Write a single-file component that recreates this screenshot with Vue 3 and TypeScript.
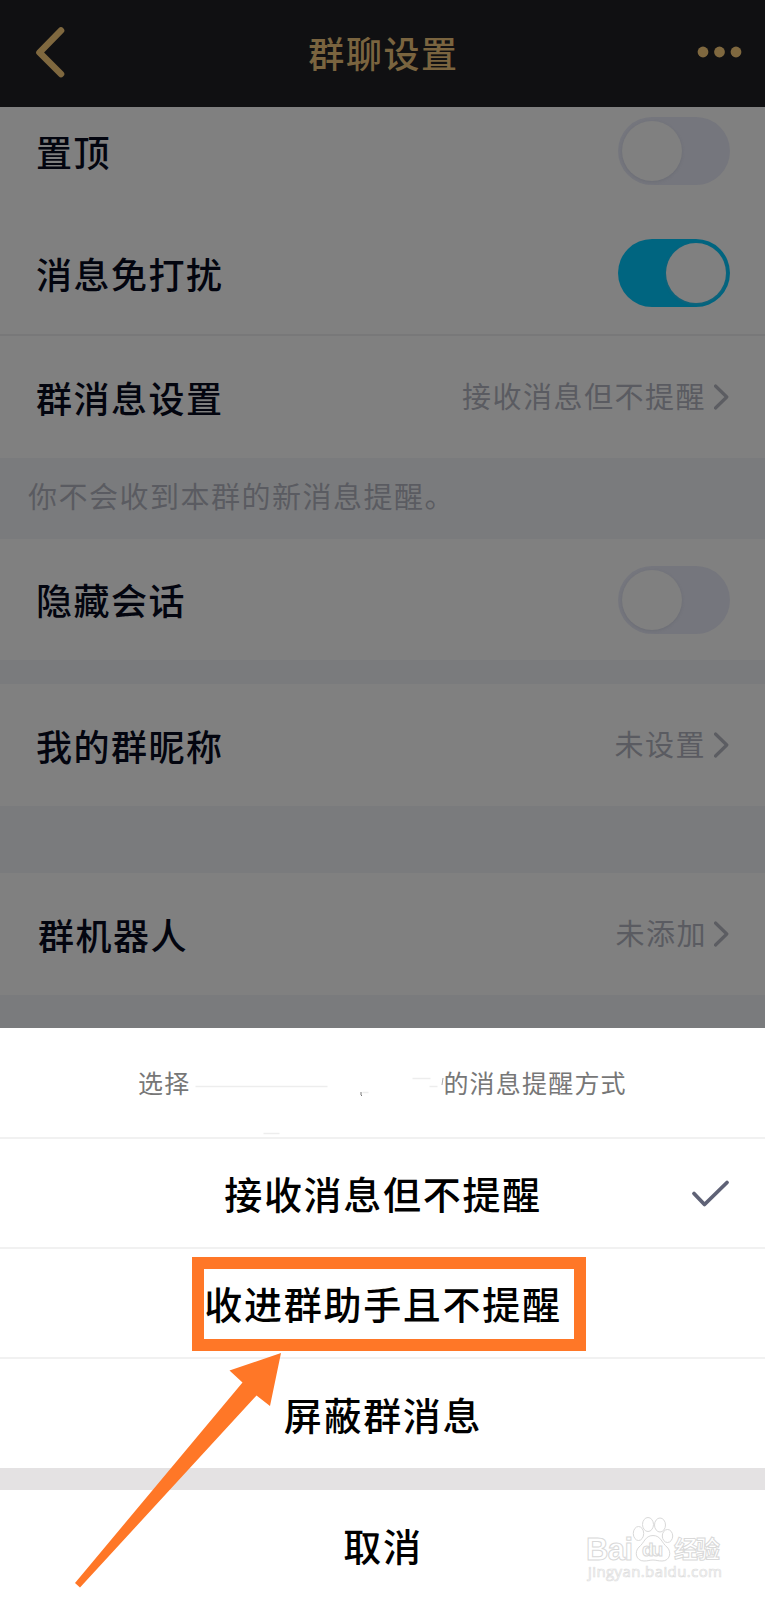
<script setup lang="ts">
interface Row {
  label: string
  kind: 'switch' | 'link'
  on?: boolean
  value?: string
  cls?: string
}

const groups: { rows: Row[]; note?: string; gap: string }[] = [
  {
    rows: [
      { label: '置顶', kind: 'switch', on: false, cls: 'first' },
      { label: '消息免打扰', kind: 'switch', on: true },
      { label: '群消息设置', kind: 'link', value: '接收消息但不提醒', cls: 'ruled' },
    ],
    note: '你不会收到本群的新消息提醒。',
    gap: 'gap-note',
  },
  { rows: [{ label: '隐藏会话', kind: 'switch', on: false, cls: 'short' }], gap: 'gap-small' },
  { rows: [{ label: '我的群昵称', kind: 'link', value: '未设置' }], gap: 'gap-large' },
  { rows: [{ label: '群机器人', kind: 'link', value: '未添加', cls: 'robot' }], gap: 'gap-end' },
]

const options = [
  { text: '接收消息但不提醒', checked: true },
  { text: '收进群助手且不提醒', marked: true },
  { text: '屏蔽群消息' },
]
</script>

<template>
  <div class="screen">
    <header class="bar">
      <svg class="back" width="34" height="56" viewBox="0 0 34 56">
        <path d="M27 6.500 5.500 28.500 27 50" />
      </svg>
      <h1>群聊设置</h1>
      <svg class="more" width="46" height="14" viewBox="0 0 46 14">
        <circle cx="6" cy="7" r="5.4" /><circle cx="22.500" cy="7" r="5.4" /><circle cx="39" cy="7" r="5.4" />
      </svg>
    </header>

    <main class="settings">
      <section v-for="(group, i) in groups" :key="i">
        <div v-for="row in group.rows" :key="row.label" class="row" :class="row.cls">
          <span class="label">{{ row.label }}</span>
          <span v-if="row.kind === 'switch'" class="switch" :class="{ on: row.on }"><i></i></span>
          <span v-else class="link">
            <span class="value">{{ row.value }}</span>
            <svg width="16" height="28" viewBox="0 0 16 28"><path d="M1.500 3 12.800 14 1.500 25" /></svg>
          </span>
        </div>
        <div class="gap" :class="group.gap">{{ group.note }}</div>
      </section>
    </main>

    <section class="sheet">
      <div class="sheet-title">
        <span>选择</span>
        <svg class="name" width="250" height="80" viewBox="0 0 250 80">
          <path class="faint" d="M4 33.500h132M221 25.500h18M238 33.500h8M72 80.500h16" />
          <path class="speck" d="M169.500 39v3l1 1" />
          <path class="faint" d="M171 39.500h6" />
          <path class="tick" d="M251.500 25l-1 7" />
        </svg>
        <span>的消息提醒方式</span>
      </div>
      <div v-for="option in options" :key="option.text" class="option">
        <span>{{ option.text }}</span>
        <svg v-if="option.checked" class="check" width="40" height="30" viewBox="0 0 40 30">
          <path d="M4 14.500 14.500 25.500 37 3.500" />
        </svg>
        <div v-if="option.marked" class="frame"></div>
      </div>
      <div class="split"></div>
      <div class="cancel">取消</div>
    </section>

    <svg class="arrow" width="215" height="240" viewBox="70 1350 215 240">
      <path d="M281 1353 229.500 1370.500 242.500 1382.500 75 1583 80 1587.500 256.500 1395.500 270 1406Z" />
    </svg>

    <svg class="watermark" width="145" height="75" viewBox="580 1512 145 75">
      <g class="brand">
        <text x="586" y="1560" font-size="31" textLength="47">Bai</text>
        <path d="M653 1535.500c-8 0-9 8-14 11.500-5 5-3 14 5 14 4 0 6-1 9-1s5 1 9 1c8 0 10-9 5-14-5-3.500-6-11.500-14-11.500z" />
        <ellipse cx="638.500" cy="1533.500" rx="5.200" ry="7" />
        <ellipse cx="648" cy="1524.500" rx="5.500" ry="7" />
        <ellipse cx="660" cy="1525" rx="5.500" ry="7" />
        <ellipse cx="667.500" cy="1536" rx="5.200" ry="6.500" />
        <text x="642" y="1556" font-size="19" textLength="21">du</text>
        <text class="cn" x="674" y="1558" font-size="24" textLength="46">经验</text>
      </g>
      <text class="url" x="588" y="1577" font-size="15" textLength="134">jingyan.baidu.com</text>
    </svg>
  </div>
</template>

<style>
body {
  background: #fff;
}
</style>

<style scoped>
.screen {
  position: relative;
  display: flex;
  flex-direction: column;
  width: 765px;
  height: 1600px;
  overflow: hidden;
  background: #fff;
  font-family: "Noto Sans CJK SC", sans-serif;
}
.bar {
  display: flex;
  align-items: center;
  justify-content: space-between;
  flex: none;
  box-sizing: border-box;
  height: 107px;
  padding: 0 22px 4px 34px;
  background: #101012;
}
.bar h1 {
  margin: 0 0 0 2px;
  color: #7a643f;
  font-size: 36px;
  line-height: 54px;
  font-weight: 500;
  letter-spacing: 1.6px;
}
.back path {
  fill: none;
  stroke: #7f683f;
  stroke-width: 6.6;
  stroke-linecap: round;
  stroke-linejoin: round;
}
.more {
  fill: #7f683f;
}
.settings {
  flex: none;
  height: 921px;
  overflow: hidden;
  background: #808080;
}
.row {
  display: flex;
  align-items: center;
  justify-content: space-between;
  box-sizing: border-box;
  height: 122px;
  padding: 0 35px 0 36px;
}
.row.first {
  margin-top: -17px;
}
.row.ruled {
  height: 124px;
  border-top: 2px solid #787879;
}
.row.short {
  height: 121px;
}
.row.robot .label {
  margin-left: 2px;
}
.row.robot .link {
  gap: 7px;
}
.label {
  margin-bottom: 1px;
  color: #03050f;
  font-size: 36px;
  line-height: 54px;
  font-weight: 500;
  letter-spacing: 1.500px;
}
.switch {
  display: flex;
  box-sizing: border-box;
  width: 112px;
  height: 68px;
  padding: 4px;
  border-radius: 34px;
  background: #75767d;
}
.switch i {
  width: 60px;
  height: 60px;
  border-radius: 50%;
  background: #808080;
  box-shadow: 0 1px 3px #5b5c6655;
}
.switch.on {
  justify-content: flex-end;
  background: #006580;
}
.link {
  display: flex;
  align-items: center;
  gap: 8px;
}
.value {
  margin-bottom: 4px;
  color: #5a5b61;
  font-size: 29px;
  line-height: 42px;
  letter-spacing: 1.500px;
}
.link svg path {
  fill: none;
  stroke: #5c5d62;
  stroke-width: 3.2;
  stroke-linecap: round;
  stroke-linejoin: round;
}
.gap {
  box-sizing: border-box;
  background: #7a7b7d;
}
.gap-note {
  height: 81px;
  padding: 16px 0 0 28px;
  color: #5a5b61;
  font-size: 29px;
  line-height: 42px;
  letter-spacing: 1.500px;
}
.gap-small {
  height: 24px;
}
.gap-large {
  height: 67px;
}
.gap-end {
  height: 40px;
}
.sheet {
  flex: 1;
  background: #fff;
}
.sheet-title {
  display: flex;
  align-items: center;
  box-sizing: border-box;
  height: 109px;
  padding: 0 0 1px 138px;
  color: #777;
  font-size: 25px;
  line-height: 38px;
  letter-spacing: 1.200px;
}
.name {
  width: 253px;
  margin: 22px 0 0;
  overflow: visible;
  fill: none;
}
.faint {
  stroke: #ededed;
  stroke-width: 1.500;
}
.speck {
  stroke: #777;
}
.tick {
  stroke: #aaa;
}
.option {
  position: relative;
  display: flex;
  align-items: center;
  justify-content: center;
  box-sizing: border-box;
  height: 110px;
  padding: 0 0 0 1px;
  border-top: 2px solid #f1f1f1;
}
.option:nth-of-type(4) {
  height: 111px;
}
.option,
.cancel {
  color: #000;
  font-size: 38px;
  line-height: 56px;
  font-weight: 500;
  letter-spacing: 1.700px;
}
.check {
  position: absolute;
  top: 40px;
  right: 35px;
  fill: none;
  stroke: #5f6276;
  stroke-width: 3.8;
  stroke-linecap: round;
  stroke-linejoin: round;
}
.frame {
  position: absolute;
  top: 8px;
  left: 192px;
  box-sizing: border-box;
  width: 394px;
  height: 94px;
  border: 12px solid #ff7727;
}
.split {
  height: 22px;
  background: #e4e2e3;
}
.cancel {
  display: flex;
  align-items: center;
  justify-content: center;
  height: 110px;
  padding-left: 1px;
}
.arrow {
  position: absolute;
  top: 1350px;
  left: 70px;
  fill: #ff7727;
}
.watermark {
  position: absolute;
  top: 1512px;
  left: 580px;
}
.brand {
  fill: #fff;
  stroke: #d9d9d9;
  stroke-width: 1;
  font-family: "Liberation Sans", sans-serif;
  font-weight: 700;
}
.cn {
  font-family: "Noto Sans CJK SC", sans-serif;
}
.url {
  fill: #fff;
  stroke: #dedede;
  stroke-width: 0.700;
  font-family: "Open Sans", sans-serif;
}
</style>
